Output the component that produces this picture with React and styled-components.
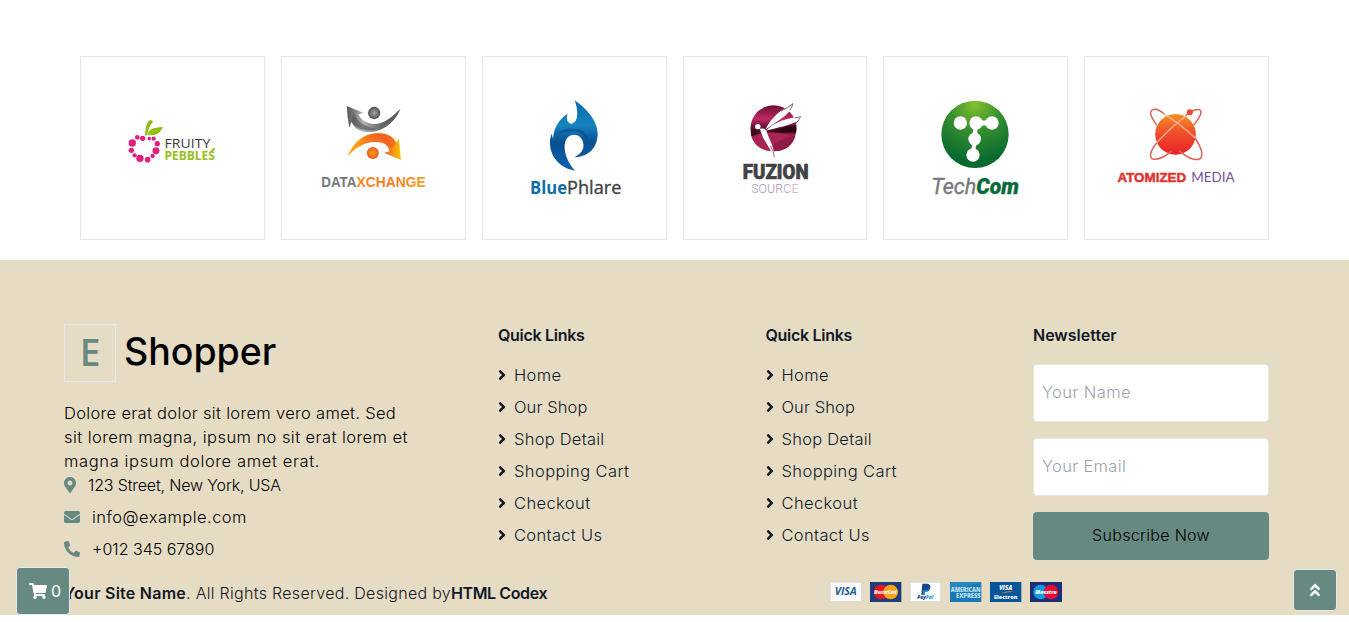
import React from "react";
import styled, { createGlobalStyle } from "styled-components";
import {
  FaAngleDoubleUp,
  FaAngleRight,
  FaEnvelope,
  FaMapMarkerAlt,
  FaPhoneAlt,
  FaShoppingCart,
} from "react-icons/fa";

const teal = "#668982";
const line = "#e5e7eb";

const GlobalStyle = createGlobalStyle`
  *, *::before, *::after { box-sizing: border-box; }
  body {
    margin: 0;
    background: #fff;
    color: #000;
    font: 300 16px/24px Inter, "Open Sans", sans-serif;
    overflow: hidden;
  }
  a { color: inherit; text-decoration: none; }
`;

const Page = styled.div`
  height: 622px;
  overflow: hidden;
`;

const Brands = styled.section`
  display: grid;
  grid-template-columns: repeat(6, 1fr);
  gap: 16px;
  padding: 56px 79.85px 20px 80px;
`;

const BrandCard = styled.div`
  height: 184px;
  border: 1px solid ${line};
`;

const Logo = styled.svg`
  display: block;
  width: 100%;
  height: 100%;
`;

const Footer = styled.footer`
  height: 355px;
  padding: 64px 80px 0 64px;
  background: #e6dcc4;
`;

const Columns = styled.div`
  display: grid;
  grid-template-columns: 434px 267.5px 267.5px 236px;
  height: 257px;
`;

const Spaced = styled.span`
  font-size: ${(p) => p.$size || "inherit"};
  letter-spacing: ${(p) => p.$track || 0}px;
  white-space: nowrap;
`;

const SiteLogo = styled.h1`
  display: flex;
  align-items: center;
  margin: 0 0 19px;
  height: 58px;
  font-size: 37.5px;
  font-weight: 500;
`;

const SiteName = styled.span`
  padding-bottom: 3px;
`;

const LogoLetter = styled.span`
  display: flex;
  align-items: center;
  justify-content: center;
  width: 52px;
  height: 58px;
  margin-right: 8px;
  border: 1px solid ${line};
  color: ${teal};
  font-family: "Open Sans", sans-serif;
  font-size: 37px;
  font-weight: 600;
  padding-bottom: 2px;
`;

const About = styled.p`
  display: flex;
  flex-direction: column;
  margin: 0;
`;

const Contact = styled.div`
  display: flex;
  align-items: center;
  height: 24px;
  margin-bottom: 8px;

  svg {
    height: 16px;
    width: ${(p) => p.$icon || 16}px;
    margin-right: 12px;
    color: ${teal};
  }
`;

const Heading = styled.h5`
  margin: -1px 0 16px;
  font-size: 16px;
  line-height: 24px;
  font-weight: 600;
  color: #111827;
`;

const LinkList = styled.nav`
  display: flex;
  flex-direction: column;
  gap: 8px;
`;

const FooterLink = styled.a`
  display: flex;
  align-items: center;
  height: 24px;
  color: #111827;

  svg {
    width: 8px;
    height: 16px;
    margin-right: 8px;
  }
`;

const Form = styled.form`
  display: flex;
  flex-direction: column;
  gap: 16px;
  padding-top: 1px;
`;

const Field = styled.input`
  width: 100%;
  height: 58px;
  padding: 0 8px 2px;
  border: 1px solid ${line};
  border-radius: 4px;
  background: #fff;
  font: inherit;
  font-size: 16.5px;
  letter-spacing: ${(p) => p.$track}px;

  &::placeholder {
    color: #9ca3af;
    font-weight: 300;
    opacity: 1;
  }
`;

const Subscribe = styled.button`
  height: 48px;
  padding: 0 0 2px;
  border: 0;
  border-radius: 4px;
  background: ${teal};
  color: #000;
  font: inherit;
`;

const Bottom = styled.div`
  display: flex;
  align-items: center;
  height: 24px;
  color: #111827;
`;

const Copyright = styled.div`
  width: 766px;
  white-space: nowrap;

  b { font-weight: 600; }
`;

const Payments = styled.div`
  display: flex;
  gap: 8px;
  margin-top: -2px;
`;

const PayCard = styled.svg`
  display: block;
  width: 32px;
  height: 20px;
`;

const Floating = styled.button`
  position: fixed;
  display: flex;
  align-items: center;
  justify-content: center;
  padding: 0;
  border: 1px solid ${line};
  border-radius: 4px;
  background: ${teal};
  color: #fff;
  font: 400 16px/24px Inter, sans-serif;
`;

const CartButton = styled(Floating)`
  left: 16px;
  top: 567px;
  width: 54px;
  height: 48px;
  padding-left: 4px;
  gap: 4px;

  svg { width: 18px; height: 16px; }
`;

const TopButton = styled(Floating)`
  left: 1293px;
  top: 569px;
  width: 44px;
  height: 42px;
  padding-bottom: 1px;

  svg { width: 10px; height: 16px; }
`;

const pebbles = [
  [202, 262, 7], [218, 265, 8], [238, 266, 5.5], [251, 266, 6.5], [262, 281, 8],
  [187, 279, 11], [184, 301, 8], [194, 316, 6.5], [210, 325, 11], [233, 329, 8.5],
  [248, 318, 6.5], [258, 302, 10.5],
];

const FruityPebbles = () => (
  <Logo viewBox="33 21 549 546">
    {pebbles.map(([x, y, r]) => (
      <circle key={`${x}-${y}`} cx={x} cy={y} r={r} fill="#e0207c" />
    ))}
    <path d="M225 257c2-17 3-36 12-45 4-3 12-1 12 3-9 9-14 22-17 40z" fill="#8dbb0c" />
    <path d="M233 254c3-15 15-22 46-23-8 18-22 29-46 23z" fill="#8dbb0c" />
    <path d="M235 253l28-14" stroke="#cfe48e" strokeWidth="1.5" />
    <text x="284" y="295" textLength="137" lengthAdjust="spacingAndGlyphs" fontFamily="Open Sans" fontSize="39" fontWeight="400" fill="#3b3b3f">FRUITY</text>
    <text x="284" y="331" textLength="151" lengthAdjust="spacingAndGlyphs" fontFamily="Open Sans" fontSize="38" fontWeight="700" fill="#98c11d">PEBBLES</text>
    <path d="M424 304q-1-8 12-11-1 10-12 11z" fill="#8dbb0c" />
  </Logo>
);

const DataXchange = () => (
  <Logo viewBox="20.5 21 548.5 546">
    <defs>
      <linearGradient id="dx-grey" x1="0" x2="1">
        <stop offset="0" stopColor="#55565a" />
        <stop offset=".3" stopColor="#aeb0b3" />
        <stop offset=".65" stopColor="#65676a" />
        <stop offset="1" stopColor="#555" />
      </linearGradient>
      <linearGradient id="dx-orange" x1="0" x2="1">
        <stop offset="0" stopColor="#fdb515" />
        <stop offset=".45" stopColor="#f37422" />
        <stop offset=".75" stopColor="#f36c21" />
        <stop offset="1" stopColor="#fdc800" />
      </linearGradient>
      <radialGradient id="dx-ball">
        <stop offset="0" stopColor="#a5a6a9" />
        <stop offset="1" stopColor="#505154" />
      </radialGradient>
      <radialGradient id="dx-sun">
        <stop offset="0" stopColor="#f9a01b" />
        <stop offset="1" stopColor="#ed5a24" />
      </radialGradient>
      <linearGradient id="dx-word" x1="0" x2="1">
        <stop offset="0" stopColor="#f58a1f" />
        <stop offset=".5" stopColor="#f47b20" />
        <stop offset="1" stopColor="#f9a01b" />
      </linearGradient>
    </defs>
    <path d="M215 168L265 189 249 193C257 210 277 223 299 222 334 219 354 196 376 176 359 218 320 248 276 246 248 244 235 229 229 215L223 233C218 212 216 190 215 168z" fill="url(#dx-grey)" />
    <path d="M229 214C243 239 276 245 305 236 275 235 241 214 235 187z" fill="#4a4b4e" opacity=".55" />
    <circle cx="297" cy="189" r="18.5" fill="url(#dx-ball)" />
    <path d="M218 319C232 280 264 250 307 249 333 249 353 257 364 279L371 264 377 330 327 308 343 304C340 286 329 279 307 276 271 273 240 293 218 319z" fill="url(#dx-orange)" />
    <path d="M252 277C283 254 327 258 348 296L364 279C348 247 301 241 252 277z" fill="#ef5a24" opacity=".55" />
    <circle cx="293" cy="309" r="18" fill="url(#dx-sun)" />
    <text x="138" y="411" textLength="106" lengthAdjust="spacingAndGlyphs" fontFamily="Liberation Sans" fontSize="43" fontWeight="700" fill="#77787b">DATA</text>
    <text x="244" y="411" textLength="208" lengthAdjust="spacingAndGlyphs" fontFamily="Liberation Sans" fontSize="43" fontWeight="700" fill="url(#dx-word)">XCHANGE</text>
  </Logo>
);

const BluePhlare = () => (
  <Logo viewBox="23 21 548.5 546">
    <defs>
      <linearGradient id="bp" x1="0" y1="0" x2="0" y2="1">
        <stop offset="0" stopColor="#0769a8" />
        <stop offset=".35" stopColor="#1783bf" />
        <stop offset=".6" stopColor="#084f91" />
        <stop offset="1" stopColor="#0c62ae" />
      </linearGradient>
    </defs>
    <path d="M298 151C333 176 365 209 367 250 367 291 342 321 297 322 315 311 327 300 324 281 322 263 308 253 294 254 276 256 266 272 268 296 270 325 286 346 299 362 255 355 226 322 224 283 223 271 225 260 229 251L233 266C235 236 249 208 277 191 271 207 276 220 289 221 308 219 311 186 298 151z" fill="url(#bp)" />
    <path d="M235 260Q251 244 278 247Q315 235 337 270Q334 239 303 237Q260 230 235 260z" fill="#063f7d" opacity=".45" />
    <text x="164" y="432" textLength="111" lengthAdjust="spacingAndGlyphs" fontFamily="Open Sans" fontSize="53" fontWeight="700" fill="#116fa5">Blue</text>
    <text x="275" y="432" textLength="163" lengthAdjust="spacingAndGlyphs" fontFamily="Open Sans" fontSize="53" fontWeight="500" fill="#414042" stroke="#414042" strokeWidth="1">Phlare</text>
  </Logo>
);

const FuzionSource = () => (
  <Logo viewBox="25.5 21 548.5 546">
    <defs>
      <linearGradient id="fz" x1="0" y1="0" x2="0" y2="1">
        <stop offset="0" stopColor="#6a1038" />
        <stop offset=".3" stopColor="#c22763" />
        <stop offset=".55" stopColor="#3d0a20" />
        <stop offset=".65" stopColor="#a51c50" />
        <stop offset="1" stopColor="#a31b4e" />
      </linearGradient>
      <linearGradient id="fz-word" x1="0" x2="1">
        <stop offset="0" stopColor="#b9a0c4" />
        <stop offset=".5" stopColor="#a487bd" />
        <stop offset="1" stopColor="#c5b9c9" />
      </linearGradient>
    </defs>
    <circle cx="294" cy="235" r="69" fill="url(#fz)" />
    <path d="M226 246q32 6 68-1 37-18 68-20v22q-32-1-66 7-36-12-69 6z" fill="#27030f" opacity=".85" />
    <path d="M228 262q50-30 130 0-14 42-64 42-52-2-66-42z" fill="#a92455" />
    <path d="M295 281q40-22 64-24-12 43-62 46z" fill="#7d1640" opacity=".6" />
    <g fill="#fff">
      <path d="M269 239C289 201 316 178 352 162 350 188 315 208 269 239z" />
      <path d="M271 242C300 215 330 204 374 201 363 224 320 229 271 242z" />
      <circle cx="247" cy="230" r="8" />
      <path d="M253 237C265 233 273 239 276 251 284 275 296 290 297 323 286 301 275 284 263 264z" />
    </g>
    <path d="M316 184q22-12 36-23-2 12-9 19" fill="none" stroke="#481426" strokeWidth="2" />
    <path d="M357 204l18-4q-4 14-17 21M285 287q9 16 12 35" fill="none" stroke="#642039" strokeWidth="2" />
    <text x="202" y="387" textLength="197" lengthAdjust="spacingAndGlyphs" fontFamily="Roboto" fontSize="61" fontWeight="900" fill="#414246" stroke="#414246" strokeWidth="2">FUZION</text>
    <text x="227" y="428" textLength="142" lengthAdjust="spacing" fontFamily="Roboto" fontSize="37" fontWeight="300" fill="url(#fz-word)">SOURCE</text>
  </Logo>
);

const TechCom = () => (
  <Logo viewBox="28 21 548.5 546">
    <defs>
      <radialGradient id="tc" cx=".5" cy=".05" r=".85">
        <stop offset="0" stopColor="#86c12f" />
        <stop offset=".45" stopColor="#37902f" />
        <stop offset="1" stopColor="#08692f" />
      </radialGradient>
    </defs>
    <circle cx="301" cy="253" r="101" fill="url(#tc)" />
    <g fill="#fff">
      <circle cx="257" cy="219" r="20" />
      <circle cx="304" cy="219" r="20" />
      <circle cx="352" cy="219" r="20" />
      <circle cx="300" cy="267" r="19" />
      <circle cx="295" cy="315" r="20" />
      <path d="M317 206q11 12 22 0v26q-11-12-22 0zM291 232q8 10 0 23h20q-8-13 2-23zM289 280q6 10-2 23h18q-6-13 5-23z" />
    </g>
    <g fontFamily="Roboto" fontStyle="italic" fontSize="65">
      <text x="170" y="432" textLength="135" lengthAdjust="spacingAndGlyphs" fontWeight="400" fill="#77787b" stroke="#77787b" strokeWidth="1">Tech</text>
      <text x="305" y="432" textLength="128" lengthAdjust="spacingAndGlyphs" fontWeight="900" fill="#08693a" stroke="#08693a" strokeWidth="1">Com</text>
    </g>
  </Logo>
);

const AtomizedMedia = () => (
  <Logo viewBox="30.5 21 548.5 546">
    <defs>
      <linearGradient id="am" x1="0" y1="0" x2="0" y2="1">
        <stop offset="0" stopColor="#f79322" />
        <stop offset=".4" stopColor="#f0562a" />
        <stop offset="1" stopColor="#e9202a" />
      </linearGradient>
    </defs>
    <circle cx="302" cy="253" r="61" fill="url(#am)" />
    <g fill="none" stroke="#dd6154" strokeWidth="4.5">
      <path d="M361 264C380 294 388 318 374 327 355 333 330 317 312 301" />
      <path d="M246 278C226 303 222 319 233 327 252 330 275 317 291 302" />
      <path d="M246 226C226 198 222 184 234 179 244 175 258 183 268 192" />
      <path d="M357 225C374 203 385 184 374 179 360 175 341 188 331 198" />
    </g>
    <g fill="none" stroke="#ffb3a0" strokeWidth="4">
      <path d="M266 192Q316 220 361 264M246 278Q288 231 334 197" />
    </g>
    <circle cx="345" cy="187" r="9" fill="#ec4a2c" />
    <text x="128" y="396" textLength="206" lengthAdjust="spacingAndGlyphs" fontFamily="Liberation Sans" fontSize="41" fontWeight="700" fill="#e5322d" stroke="#e5322d" strokeWidth="1.5">ATOMIZED</text>
    <text x="349" y="396" textLength="130" lengthAdjust="spacingAndGlyphs" fontFamily="Lato" fontSize="41" fontWeight="400" fill="#7650a0">MEDIA</text>
  </Logo>
);

const PayText = (props) => (
  <text textAnchor="middle" fontFamily="Open Sans" fontWeight="800" fill="#fff" {...props} />
);

const PaymentCards = () => (
  <Payments>
    <PayCard viewBox="0 0 96 60">
      <rect x="1" y="1" width="93" height="57" fill="#fafafa" stroke="#d9dbe2" strokeWidth="2" />
      <PayText x="47" y="40" fontSize="30" fontStyle="italic" fontWeight="700" fill="#1f5c93" textLength="66" lengthAdjust="spacingAndGlyphs">VISA</PayText>
    </PayCard>
    <PayCard viewBox="0 0 96 60">
      <rect width="94" height="60" fill="#1c3c7c" />
      <circle cx="33" cy="30" r="22" fill="#e9141d" />
      <circle cx="62" cy="30" r="22" fill="#f8a51b" />
      <PayText x="47" y="36" fontSize="17" fontStyle="italic" textLength="68" lengthAdjust="spacingAndGlyphs">MasterCard</PayText>
    </PayCard>
    <PayCard viewBox="0 0 96 60">
      <rect x="1" y="1" width="91" height="57" fill="#fff" stroke="#d9dbe2" strokeWidth="2" />
      <path d="M37 5h15q12 2 8 15-3 10-15 9l-2 10h-9z" fill="#18468d" />
      <path d="M59 14q3 14-13 15l-2 10h-7l3-15h8q9-1 11-10z" fill="#2187c8" />
      <text x="22" y="52" fontFamily="Open Sans" fontSize="17" fontWeight="800" fontStyle="italic" fill="#1d3f87" textLength="48" lengthAdjust="spacingAndGlyphs">Pay<tspan fill="#2a9cdc">Pal</tspan></text>
    </PayCard>
    <PayCard viewBox="0 0 96 60">
      <rect width="94" height="60" fill="#1b78b2" />
      <path d="M0 0h94L0 28z" fill="#3191c2" opacity=".6" />
      <PayText x="47" y="30" fontSize="19" fill="#b9e0f2" textLength="90" lengthAdjust="spacingAndGlyphs">AMERICAN</PayText>
      <PayText x="55" y="49" fontSize="19" fill="#b9e0f2" textLength="74" lengthAdjust="spacingAndGlyphs">EXPRESS</PayText>
    </PayCard>
    <PayCard viewBox="0 0 96 60">
      <rect width="94" height="60" fill="#07569a" />
      <PayText x="47" y="25" fontSize="20" fontStyle="italic" textLength="39" lengthAdjust="spacingAndGlyphs">VISA</PayText>
      <path d="M36 33q18-6 31-4-16 0-31 4z" fill="#e99b29" stroke="#e99b29" />
      <PayText x="47" y="51" fontSize="17" textLength="70" lengthAdjust="spacingAndGlyphs">Electron</PayText>
    </PayCard>
    <PayCard viewBox="0 0 96 60">
      <rect width="96" height="60" fill="#1c2f75" />
      <circle cx="32" cy="30" r="22" fill="#0a9be0" />
      <circle cx="63" cy="30" r="22" fill="#e30b35" />
      <PayText x="48" y="36" fontSize="17" fontStyle="italic" textLength="64" lengthAdjust="spacingAndGlyphs">Maestro</PayText>
    </PayCard>
  </Payments>
);

const brands = [FruityPebbles, DataXchange, BluePhlare, FuzionSource, TechCom, AtomizedMedia];

const links = [
  ["Home", 0.38],
  ["Our Shop", 0.1],
  ["Shop Detail", 0.25],
  ["Shopping Cart", 0.41],
  ["Checkout", 0.4],
  ["Contact Us", 0.34],
];

const QuickLinks = () => (
  <div>
    <Heading><Spaced $track={-0.3}>Quick Links</Spaced></Heading>
    <LinkList>
      {links.map(([label, track]) => (
        <FooterLink href="#" key={label}>
          <FaAngleRight />
          <Spaced $size="16.5px" $track={track}>{label}</Spaced>
        </FooterLink>
      ))}
    </LinkList>
  </div>
);

export default function App() {
  return (
    <Page>
      <GlobalStyle />
      <Brands>
        {brands.map((Brand, i) => (
          <BrandCard key={i}><Brand /></BrandCard>
        ))}
      </Brands>
      <Footer>
        <Columns>
          <div>
            <SiteLogo>
              <LogoLetter>E</LogoLetter>
              <SiteName>Shopper</SiteName>
            </SiteLogo>
            <About>
              <Spaced $size="16.5px" $track={0.32}>Dolore erat dolor sit lorem vero amet. Sed</Spaced>
              <Spaced $size="16.5px" $track={0.44}>sit lorem magna, ipsum no sit erat lorem et</Spaced>
              <Spaced $size="16.5px" $track={0.63}>magna ipsum dolore amet erat.</Spaced>
            </About>
            <Contact $icon={12}><FaMapMarkerAlt /><Spaced $track={-0.15}>123 Street, New York, USA</Spaced></Contact>
            <Contact><FaEnvelope /><Spaced $size="16.5px" $track={0.47}>info@example.com</Spaced></Contact>
            <Contact><FaPhoneAlt /><Spaced>+012 345 67890</Spaced></Contact>
          </div>
          <QuickLinks />
          <QuickLinks />
          <div>
            <Heading>Newsletter</Heading>
            <Form>
              <Field placeholder="Your Name" $track={0.4} />
              <Field placeholder="Your Email" $track={0.33} />
              <Subscribe type="button"><Spaced $track={0.32}>Subscribe Now</Spaced></Subscribe>
            </Form>
          </div>
        </Columns>
        <Bottom>
          <Copyright>
            <Spaced as="b" $track={0.25}>Your Site Name</Spaced>
            <Spaced $track={0.3}>. All Rights Reserved. Designed by</Spaced>
            <Spaced as="b" $track={-0.4}>HTML Codex</Spaced>
          </Copyright>
          <PaymentCards />
        </Bottom>
      </Footer>
      <CartButton type="button"><FaShoppingCart />0</CartButton>
      <TopButton type="button"><FaAngleDoubleUp /></TopButton>
    </Page>
  );
}
